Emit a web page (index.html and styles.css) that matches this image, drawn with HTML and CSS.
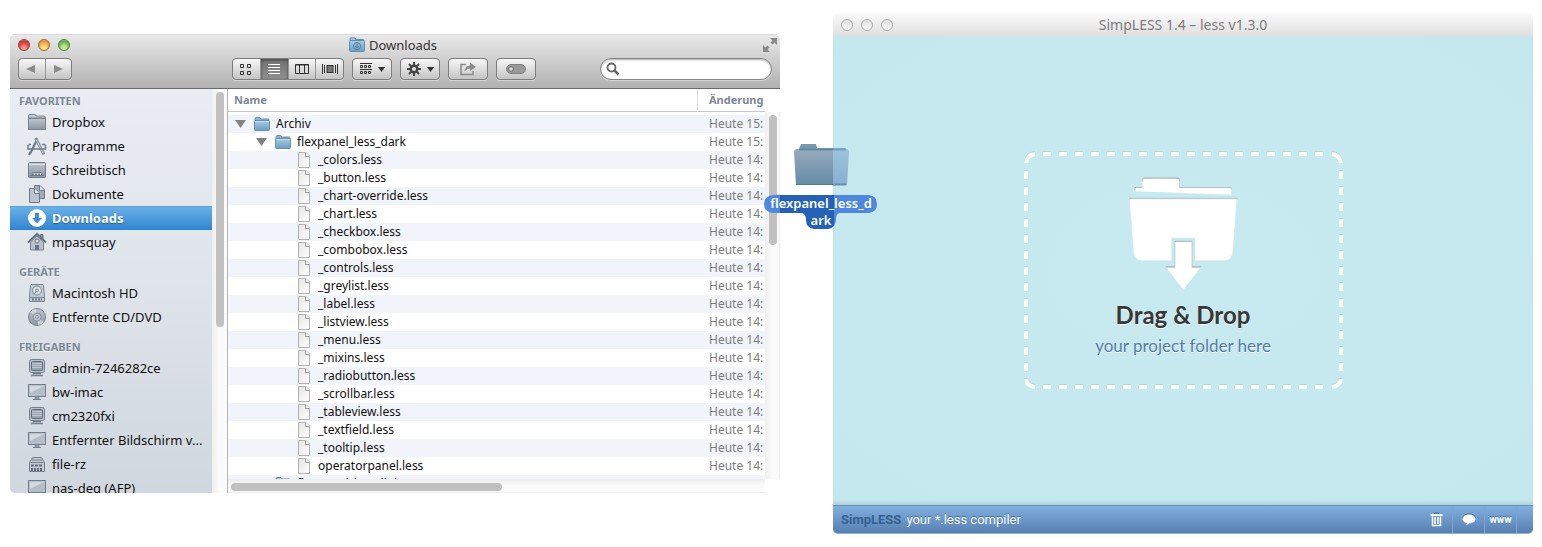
FILE: index.html
```html
<!DOCTYPE html>
<html lang="de">
<head>
<meta charset="utf-8">
<title>SimpLESS</title>
<link rel="stylesheet" href="styles.css">
</head>
<body>
<svg class="defs" width="0" height="0" aria-hidden="true">
  <defs>
    <linearGradient id="blue" x1="0" y1="0" x2="0" y2="1"><stop offset="0" stop-color="#a9cbe0"/><stop offset="1" stop-color="#6b9fc2"/></linearGradient>
    <linearGradient id="grey" x1="0" y1="0" x2="0" y2="1"><stop offset="0" stop-color="#c0c5cd"/><stop offset="1" stop-color="#8b94a0"/></linearGradient>
    <linearGradient id="page" x1="0" y1="0" x2="1" y2="1"><stop offset="0" stop-color="#e4e4e4"/><stop offset="1" stop-color="#ffffff"/></linearGradient>
    <symbol id="i-folder" viewBox="0 0 16 14"><path d="M1 2.500Q1 .5 2 .5H5.500Q6.500 .5 6.500 2H14.500Q15 2 15 3V5H1Z" fill="#8fb5cf" stroke="#648eac"/><rect x=".5" y="3.500" width="15" height="10" rx="1" fill="url(#blue)" stroke="#6691b0"/><path d="M1 4.500H15" stroke="#c3dcec"/></symbol>
    <symbol id="i-file" viewBox="0 0 12 16"><path d="M.5 .5H8L11.500 4V15.500H.5Z" fill="url(#page)" stroke="#b2b2b2"/><path d="M7.500 .5V4.500H11.500" fill="#fff" stroke="#999"/></symbol>
    <symbol id="i-dropbox" viewBox="0 0 20 20"><path d="M1.500 6V4Q1.500 2.500 3 2.500H8Q9 2.500 9 4H17Q18.500 4 18.500 6Z" fill="#c3c8cf" stroke="#7f8893"/><rect x="1.500" y="6.500" width="17" height="11" fill="url(#grey)" stroke="#7a838e"/></symbol>
    <symbol id="i-apps" viewBox="0 0 20 20"><path d="M10.500 2.500L3.500 17M2 19L3.500 16" stroke="#6f7b88" stroke-width="2.200"/><path d="M8.500 2L17 18.500" stroke="#8994a0" stroke-width="3"/><path d="M9.500 4L16 17" stroke="#c8ced5"/><path d="M1 9V13H18.500V9M1.500 8.500H4M15 8.500H18.500" fill="none" stroke="#6f7b88" stroke-width="1.500"/></symbol>
    <symbol id="i-desktop" viewBox="0 0 20 20"><rect x="1.500" y="2.500" width="17" height="15" rx="1" fill="url(#grey)" stroke="#717c89"/><path d="M2 4.500H18" stroke="#e3e7ec"/><path d="M3.500 15.500H16.500L14.500 12.500H5.500Z" fill="#dfe3e9" stroke="#707b87"/><path d="M5 14.500H15" stroke="#6b7683" stroke-width="2" stroke-dasharray="2 1"/></symbol>
    <symbol id="i-docs" viewBox="0 0 20 20"><path d="M7.500 1.500H13L17.500 6V14.500H7.500Z" fill="#a3acb7" stroke="#707b87"/><path d="M12.500 1.500V6.500H17.500" fill="#e4e7ec" stroke="#707b87"/><path d="M2.500 4.500H8L12.500 9V18.500H2.500Z" fill="#bcc3cc" stroke="#707b87"/><path d="M7.500 4.500V9.500H12.500" fill="#e4e7ec" stroke="#707b87"/></symbol>
    <symbol id="i-down" viewBox="0 0 20 20"><circle cx="10" cy="10" r="9" fill="#fff"/><path d="M8 5H12V10H15L10 15.500L5 10H8Z" fill="#3f8ed4"/></symbol>
    <symbol id="i-home" viewBox="0 0 20 20"><path d="M3.500 10L10 4L16.500 10V18H3.500Z" fill="#b9c0ca" stroke="#7b8592"/><path d="M13.500 7V2.500H16V9" fill="#8f99a5" stroke="#68737f"/><path d="M1 10.500L10 2L19 10.500" fill="none" stroke="#68737f" stroke-width="2"/><circle cx="10" cy="9" r="2" fill="#dfe3e8" stroke="#68737f"/><rect x="8" y="13" width="4" height="5" fill="#6a7581"/></symbol>
    <symbol id="i-hd" viewBox="0 0 20 20"><path d="M3.500 2.500Q3.500 1.500 5 1.500H15Q16.500 1.500 16.500 2.500L17.500 14V18.500H2.500V14Z" fill="#c3c9d1" stroke="#7b8592"/><circle cx="10" cy="7.500" r="4.500" fill="#dfe3e9" stroke="#7b8592"/><circle cx="10" cy="7.500" r="1.500" fill="none" stroke="#7b8592"/><path d="M10 8L6 11.500" stroke="#7b8592"/><path d="M3 14.500H17" stroke="#7b8592"/><path d="M5 16.500H15" stroke="#6a7581" stroke-width="2" stroke-dasharray="2 1"/></symbol>
    <symbol id="i-cd" viewBox="0 0 20 20"><circle cx="10" cy="10" r="8.500" fill="url(#grey)" stroke="#7b8592"/><path d="M10 10L3 5Q6 1.500 9 2ZM10 10L17 15Q14 18.500 11 18Z" fill="#dde1e7" opacity=".7"/><circle cx="10" cy="10" r="4" fill="#c5cbd3" stroke="#8993a0"/><circle cx="10" cy="10" r="1.500" fill="#eef0f3" stroke="#7b8592"/></symbol>
    <symbol id="i-pc" viewBox="0 0 20 20"><rect x="2.500" y="1.500" width="15" height="13" rx="2" fill="#bcc3cc" stroke="#75808c"/><rect x="4.500" y="3.500" width="11" height="9" rx="1" fill="#98a2ae" stroke="#5f6b79"/><path d="M5 5.500H15M5 7.500H15M5 9.500H15" stroke="#c3c9d1"/><path d="M6 15.500H14M4 17.500H16" stroke="#75808c" stroke-width="1.500"/></symbol>
    <symbol id="i-mac" viewBox="0 0 20 20"><rect x="1.500" y="2.500" width="17" height="12" fill="#b5bdc7" stroke="#75808c"/><path d="M3 4H17L3 11Z" fill="#d5dae0"/><path d="M8 15H12L13 17.500H7Z" fill="#8e98a4"/><path d="M6 17.500H14" stroke="#75808c"/></symbol>
    <symbol id="i-server" viewBox="0 0 20 20"><path d="M5.500 3.500H14.500L17.500 8.500V17.500H2.500V8.500Z" fill="#c4cad2" stroke="#75808c"/><path d="M5 6H15M3.500 8.500H16.500" stroke="#75808c"/><path d="M4 11.500H16" stroke="#5f6b79" stroke-width="2" stroke-dasharray="3 1"/><path d="M4 15.500H16" stroke="#5f6b79" stroke-width="3" stroke-dasharray="2 1"/></symbol>
  </defs>
</svg>

<section class="window finder" aria-label="Downloads">
  <header class="chrome">
    <div class="titlebar">
      <div class="lights">
        <button class="light red" aria-label="Schließen"></button>
        <button class="light amber" aria-label="Minimieren"></button>
        <button class="light green" aria-label="Zoomen"></button>
      </div>
      <h1 class="title">
        <svg width="16" height="16" viewBox="0 0 16 16" aria-hidden="true"><path d="M1 4V2Q1 .8 2 .8H5.500Q6.500 .8 6.500 2.500H14.500Q15 2.500 15 4Z" fill="#a3c6dc" stroke="#5f8fb2"/><rect x=".5" y="3.500" width="15" height="11" rx="1" fill="url(#blue)" stroke="#5f8fb2"/><circle cx="8" cy="9" r="3.500" fill="none" stroke="#4c7da2"/><path d="M8 6.500V10.500M6.300 9L8 11L9.700 9" fill="none" stroke="#4c7da2"/></svg>
        Downloads
      </h1>
      <button class="bare full" aria-label="Vollbild"><svg width="16" height="16" viewBox="0 0 16 16"><path d="M8 1H15V8L12.500 5.500L10.500 7.500L8.500 5.500L10.500 3.500ZM1 8L3.500 10.500L5.500 8.500L7.500 10.500L5.500 12.500L8 15H1Z" fill="#888"/></svg></button>
    </div>
    <div class="toolbar">
      <div class="group nav">
        <button class="seg" aria-label="Zurück"><svg width="11" height="10"><path d="M0 5L9 1V9Z" fill="#8a8a8a"/></svg></button>
        <button class="seg" aria-label="Vorwärts"><svg width="11" height="10"><path d="M10 5L1 1V9Z" fill="#8a8a8a"/></svg></button>
      </div>
      <div class="group views">
        <button class="seg" aria-label="Symbole"><svg width="12" height="12" fill="none" stroke="#333"><path d="M.5 1.500H3.500V4.500H.5ZM7.500 1.500H10.500V4.500H7.500ZM.5 8.500H3.500V11.500H.5ZM7.500 8.500H10.500V11.500H7.500Z"/></svg></button>
        <button class="seg on" aria-label="Liste"><svg width="12" height="12" stroke="#fff"><path d="M0 1.500H12M0 4.500H12M0 7.500H12M0 10.500H12"/></svg></button>
        <button class="seg" aria-label="Spalten"><svg width="14" height="12" fill="none" stroke="#333"><path d="M.5 1.500H13.500V10.500H.5ZM4.500 1V11M9.500 1V11M0 2H14"/></svg></button>
        <button class="seg" aria-label="Cover Flow"><svg width="16" height="12" stroke="#333"><path d="M.5 1V11M2.500 2V10M13.500 2V10M15.500 1V11"/><rect x="5" y="2.500" width="6" height="7" fill="#777"/></svg></button>
      </div>
      <button class="tool" aria-label="Ausrichten"><svg width="12" height="12" fill="none" stroke="#333"><path d="M0 .5H12M0 6.500H12"/><path d="M.5 2.500H2.500V4.500H.5ZM4.500 2.500H6.500V4.500H4.500ZM8.500 2.500H10.500V4.500H8.500ZM.5 8.500H2.500V10.500H.5ZM4.500 8.500H6.500V10.500H4.500ZM8.500 8.500H10.500V10.500H8.500Z"/></svg><svg width="7" height="5"><path d="M0 0H7L3.500 5Z" fill="#333"/></svg></button>
      <button class="tool" aria-label="Aktion"><svg width="14" height="14" viewBox="0 0 14 14" fill="none" stroke="#444"><circle cx="7" cy="7" r="3.300" stroke-width="2.400"/><path d="M7 0V3M7 11V14M0 7H3M11 7H14M2 2L4.200 4.200M9.800 9.800L12 12M2 12L4.200 9.800M9.800 4.200L12 2" stroke-width="2"/></svg><svg width="7" height="5"><path d="M0 0H7L3.500 5Z" fill="#333"/></svg></button>
      <button class="tool" aria-label="Bereitstellen"><svg width="16" height="14" viewBox="0 0 16 14"><path d="M6 2.500H1V12.500H13V9" fill="none" stroke="#8a8a8a" stroke-width="1.500"/><path d="M4.500 9.500Q5 4 10 3.500V.5L16 5L10 9V6.500Q7 6.500 4.500 9.500Z" fill="#8a8a8a"/></svg></button>
      <button class="tool" aria-label="Etikett"><svg width="20" height="10"><rect x=".5" y=".5" width="19" height="9" rx="4.500" fill="#999" stroke="#808080"/><circle cx="5" cy="5" r="2.300" fill="#d8d8d8" stroke="#707070"/></svg></button>
      <label class="search"><svg width="14" height="14" viewBox="0 0 14 14" fill="none" stroke="#666"><circle cx="5.500" cy="5.500" r="4" stroke-width="1.800"/><path d="M8.500 8.500L12.500 12.500" stroke-width="2.500"/></svg><input type="search" aria-label="Suchen"></label>
    </div>
  </header>

  <div class="panes">
    <nav class="sidebar">
      <h2>FAVORITEN</h2>
      <a href="#"><svg><use href="#i-dropbox"/></svg>Dropbox</a>
      <a href="#"><svg><use href="#i-apps"/></svg>Programme</a>
      <a href="#"><svg><use href="#i-desktop"/></svg>Schreibtisch</a>
      <a href="#"><svg><use href="#i-docs"/></svg>Dokumente</a>
      <a href="#" class="current" aria-current="page"><svg><use href="#i-down"/></svg>Downloads</a>
      <a href="#"><svg><use href="#i-home"/></svg>mpasquay</a>
      <h2>GERÄTE</h2>
      <a href="#"><svg><use href="#i-hd"/></svg>Macintosh HD</a>
      <a href="#"><svg><use href="#i-cd"/></svg>Entfernte CD/DVD</a>
      <h2>FREIGABEN</h2>
      <a href="#"><svg><use href="#i-pc"/></svg>admin-7246282ce</a>
      <a href="#"><svg><use href="#i-mac"/></svg>bw-imac</a>
      <a href="#"><svg><use href="#i-pc"/></svg>cm2320fxi</a>
      <a href="#"><svg><use href="#i-mac"/></svg>Entfernter Bildschirm v...</a>
      <a href="#"><svg><use href="#i-server"/></svg>file-rz</a>
      <a href="#"><svg><use href="#i-mac"/></svg>nas-deq (AFP)</a>
    </nav>
    <div class="track side-track"><span class="thumb"></span></div>

    <div class="list">
      <div class="rows">
        <table>
          <colgroup><col><col class="date-col"></colgroup>
          <thead><tr><th scope="col">Name</th><th scope="col">Änderung</th></tr></thead>
          <tbody>
            <tr><td><div class="entry"><button class="bare tri" aria-label="Archiv zuklappen"></button><svg class="ic"><use href="#i-folder"/></svg>Archiv</div></td><td>Heute 15:</td></tr>
            <tr><td><div class="entry sub"><button class="bare tri" aria-label="flexpanel_less_dark zuklappen"></button><svg class="ic"><use href="#i-folder"/></svg>flexpanel_less_dark</div></td><td>Heute 15:</td></tr>
            <tr><td><div class="entry leaf"><svg class="ic"><use href="#i-file"/></svg>_colors.less</div></td><td>Heute 14:</td></tr>
            <tr><td><div class="entry leaf"><svg class="ic"><use href="#i-file"/></svg>_button.less</div></td><td>Heute 14:</td></tr>
            <tr><td><div class="entry leaf"><svg class="ic"><use href="#i-file"/></svg>_chart-override.less</div></td><td>Heute 14:</td></tr>
            <tr><td><div class="entry leaf"><svg class="ic"><use href="#i-file"/></svg>_chart.less</div></td><td>Heute 14:</td></tr>
            <tr><td><div class="entry leaf"><svg class="ic"><use href="#i-file"/></svg>_checkbox.less</div></td><td>Heute 14:</td></tr>
            <tr><td><div class="entry leaf"><svg class="ic"><use href="#i-file"/></svg>_combobox.less</div></td><td>Heute 14:</td></tr>
            <tr><td><div class="entry leaf"><svg class="ic"><use href="#i-file"/></svg>_controls.less</div></td><td>Heute 14:</td></tr>
            <tr><td><div class="entry leaf"><svg class="ic"><use href="#i-file"/></svg>_greylist.less</div></td><td>Heute 14:</td></tr>
            <tr><td><div class="entry leaf"><svg class="ic"><use href="#i-file"/></svg>_label.less</div></td><td>Heute 14:</td></tr>
            <tr><td><div class="entry leaf"><svg class="ic"><use href="#i-file"/></svg>_listview.less</div></td><td>Heute 14:</td></tr>
            <tr><td><div class="entry leaf"><svg class="ic"><use href="#i-file"/></svg>_menu.less</div></td><td>Heute 14:</td></tr>
            <tr><td><div class="entry leaf"><svg class="ic"><use href="#i-file"/></svg>_mixins.less</div></td><td>Heute 14:</td></tr>
            <tr><td><div class="entry leaf"><svg class="ic"><use href="#i-file"/></svg>_radiobutton.less</div></td><td>Heute 14:</td></tr>
            <tr><td><div class="entry leaf"><svg class="ic"><use href="#i-file"/></svg>_scrollbar.less</div></td><td>Heute 14:</td></tr>
            <tr><td><div class="entry leaf"><svg class="ic"><use href="#i-file"/></svg>_tableview.less</div></td><td>Heute 14:</td></tr>
            <tr><td><div class="entry leaf"><svg class="ic"><use href="#i-file"/></svg>_textfield.less</div></td><td>Heute 14:</td></tr>
            <tr><td><div class="entry leaf"><svg class="ic"><use href="#i-file"/></svg>_tooltip.less</div></td><td>Heute 14:</td></tr>
            <tr><td><div class="entry leaf"><svg class="ic"><use href="#i-file"/></svg>operatorpanel.less</div></td><td>Heute 14:</td></tr>
            <tr><td><div class="entry sub closed"><svg class="ic"><use href="#i-folder"/></svg>flexpanel_less_light</div></td><td></td></tr>
          </tbody>
        </table>
      </div>
      <div class="track list-track"><span class="thumb"></span></div>
      <div class="track bottom-track"><span class="thumb"></span></div>
    </div>
  </div>
</section>

<section class="window simpless" aria-label="SimpLESS">
  <header class="plainbar">
    <div class="lights">
      <button class="light" aria-label="Close"></button>
      <button class="light" aria-label="Minimize"></button>
      <button class="light" aria-label="Zoom"></button>
    </div>
    <h1 class="title faded">SimpLESS 1.4 – less v1.3.0</h1>
  </header>
  <main class="stage">
    <div class="dropzone">
      <svg class="dashes" width="319" height="239" viewBox="0 0 319 239" fill="none" aria-hidden="true">
        <g stroke="#b4d6dc" stroke-width="4">
          <path d="M19 2H300M19 235H300" stroke-dasharray="8 8"/>
          <path d="M2 19V220M317 19V220" stroke-dasharray="8 8"/>
          <path d="M2 11Q3 3 11 2M308 2Q316 3 317 11M317 227Q316 234 308 235M11 235Q3 234 2 227"/>
        </g>
        <g stroke="#fff" stroke-width="4">
          <path d="M19 3H300M19 236H300" stroke-dasharray="8 8"/>
          <path d="M2 20V220M317 20V220" stroke-dasharray="8 8"/>
          <path d="M2 12Q3 4 11 3M308 3Q316 4 317 12M317 228Q316 235 308 236M11 236Q3 235 2 228"/>
        </g>
      </svg>
      <svg class="artwork" width="109" height="114" viewBox="360 112 327 342" aria-hidden="true">
        <g fill="#b3bfc2">
          <path d="M377 142H399V121Q399 113 407 113H505Q513 113 513 121V142H668V150H377Z"/>
          <path d="M360 174H685V181H360Z"/>
        </g>
        <path d="M378 145H400V124Q400 117 408 117H504Q511 117 511 124V145H667V165L378 155Z" fill="#fff"/>
        <path d="M361 178H684L672 335Q669 363 648 363H398Q376 363 373 335Z" fill="#fff" stroke="#d8e5e8" stroke-width="2"/>
        <path d="M487 294H558V373H590L523 460L456 373H487Z" fill="#c6e9ef"/>
        <path d="M497 303H550V379H577L523 450L469 379H497Z" fill="#b3bfc2"/>
        <path d="M499 307H548V384H574L523 451L472 384H499Z" fill="#fff"/>
      </svg>
      <h2>Drag &amp; Drop</h2>
      <p>your project folder here</p>
    </div>
  </main>
  <footer class="statusbar">
    <strong>SimpLESS</strong><span class="tagline">your *.less compiler</span>
    <div class="actions">
      <button class="bare" aria-label="Clear"><svg width="13" height="15" viewBox="0 0 13 15" fill="none" stroke="#fff"><path d="M4.500 2.500V1H8.500V2.500" stroke="#3b618d"/><path d="M.5 3H12.500" stroke-width="2"/><path d="M2.500 4.500V13.500H10.500V4.500M5 5V12M8 5V12" stroke-width="1.500"/></svg></button>
      <button class="bare" aria-label="Feedback"><svg width="14" height="13" viewBox="0 0 14 13"><ellipse cx="7" cy="5" rx="6.500" ry="4.500" fill="#3b618d"/><path d="M7 1.500C11 1.500 13.500 3.500 13.500 6C13.500 8.500 11 10 7.500 10.300Q6 12 4 12.300Q5 11 5 10C2 9.500 .5 8 .5 6C.5 3.500 3 1.500 7 1.500Z" fill="#fff"/></svg></button>
      <a href="#">www</a>
    </div>
  </footer>

  <div class="dragged">
    <svg width="57" height="46" viewBox="0 0 57 46" aria-hidden="true">
      <defs>
        <linearGradient id="over" x1="0" y1="0" x2="0" y2="1"><stop offset="0" stop-color="#98abbd"/><stop offset="1" stop-color="#648ba6"/></linearGradient>
        <linearGradient id="light" x1="0" y1="0" x2="0" y2="1"><stop offset="0" stop-color="#9cc4dc"/><stop offset="1" stop-color="#87b0d2"/></linearGradient>
        <clipPath id="l"><path d="M0 0H40V46H0Z"/></clipPath>
        <clipPath id="r"><path d="M40 0H57V46H40Z"/></clipPath>
      </defs>
      <g clip-path="url(#l)"><path d="M5 10L8 2H23L24 6H52L54 10Z" fill="#7798ae"/><path d="M1 10Q1 8 3 7H54Q56 8 56 10L54 43H3Z" fill="url(#over)"/><path d="M6 7.500H53" stroke="#628ba7" stroke-width="2"/><path d="M3 42.500H54" stroke="#567d98"/></g>
      <g clip-path="url(#r)"><path d="M5 10L8 2H23L24 6H52L54 10Z" fill="#7eabcb"/><path d="M1 10Q1 8 3 7H54Q56 8 56 10L54 43H3Z" fill="url(#light)"/><path d="M6 7.500H53" stroke="#70a1c6" stroke-width="2"/><path d="M3 42.500H53" stroke="#6590b1" stroke-width="2"/></g>
    </svg>
    <div class="caption">
      <svg width="114" height="34" viewBox="0 0 114 34" aria-hidden="true">
        <defs><linearGradient id="pill" gradientUnits="userSpaceOnUse" x1="0" y1="0" x2="114" y2="0"><stop offset=".14" stop-color="#4e88de"/><stop offset=".14" stop-color="#2562b6"/><stop offset=".61" stop-color="#2562b6"/><stop offset=".61" stop-color="#4e88de"/></linearGradient></defs>
        <path d="M9 0H105Q113 1 113 9Q113 17 105 18H76Q72 18 72 24Q72 33 64 34H50Q42 33 42 25Q42 18 37 18H9Q0 17 0 9Q0 1 9 0Z" fill="url(#pill)"/>
      </svg>
      <span>flexpanel_less_d<br>ark</span>
    </div>
  </div>
</section>
</body>
</html>
```

FILE: styles.css
```css
* { box-sizing: border-box; }

body {
  margin: 0;
  height: 100vh;
  min-height: 500px;
  padding: 13px 9px 13px 10px;
  display: flex;
  gap: 53px;
  background: #fff;
  font: 13px/18px "Noto Sans", "Open Sans", sans-serif;
  color: #111;
  overflow: hidden;
}

.defs { position: absolute; }
svg { display: block; flex: none; }
h1, h2, p { margin: 0; font-weight: 400; }
a { color: inherit; text-decoration: none; }

button { font: inherit; color: inherit; padding: 0; border: 0; }
.bare { background: none; }

.window { display: flex; flex-direction: column; min-width: 0; }
.finder { flex: 770 1 0; margin: 21px 0 41px; border-radius: 5px 5px 0 5px; overflow: hidden; }
.simpless { flex: 700 1 0; position: relative; }

/* Title bars */
.chrome {
  height: 55px;
  flex: none;
  border-top: 1px solid #d9d9d9;
  border-bottom: 1px solid #6a6a6a;
  background: linear-gradient(#e9e9e9, #cdcdcd 50%, #b1b1b1);
}
.titlebar, .plainbar {
  display: grid;
  grid-template-columns: 1fr auto 1fr;
  align-items: center;
  padding: 0 8px;
}
.titlebar { height: 20px; padding-right: 12px; }
.lights { display: flex; gap: 8px; }
.light {
  width: 12px;
  height: 12px;
  border-radius: 50%;
  border: 1px solid #aeaeae;
  background: linear-gradient(#dedede, #fafafa);
}
.red { border-color: #8e3a38; background: radial-gradient(circle at 50% 85%, #ffb5ae, #e4504d 50%, #c63b3c 75%, #f5aaaa); }
.amber { border-color: #95662b; background: radial-gradient(circle at 50% 85%, #ffefa1, #efb34c 55%, #dc9438 75%, #fbe0ae); }
.green { border-color: #4b7a36; background: radial-gradient(circle at 50% 85%, #dcf8b2, #86c463 55%, #68a94c 75%, #d2efc0); }
.title { display: flex; align-items: center; gap: 4px; font-size: 13px; line-height: 20px; color: #333; white-space: nowrap; }
.full { justify-self: end; margin-right: -10px; }

.toolbar { display: flex; align-items: center; gap: 8px; padding: 3px 8px 0; }
.group, .tool {
  height: 22px;
  border: 1px solid #7d7d7d;
  border-radius: 4px;
  background: linear-gradient(#f8f8f8, #c4c4c4);
  box-shadow: 0 1px 0 #d4d4d4;
}
.group { display: flex; overflow: hidden; }
.nav { width: 54px; margin-right: 152px; }
.views { width: 112px; }
.seg { flex: 1; display: grid; place-items: center; background: none; }
.seg + .seg { border-left: 1px solid #959595; }
.seg.on { background: linear-gradient(#727272, #8f8f8f); box-shadow: inset 0 1px 3px #444; }
.tool { width: 40px; display: flex; align-items: center; justify-content: center; gap: 6px; }
.search {
  display: flex;
  align-items: center;
  width: 172px;
  height: 22px;
  margin-left: auto;
  padding: 0 5px;
  border: 1px solid #858585;
  border-radius: 11px;
  background: #fff;
  box-shadow: inset 0 1px 2px #aaa, 0 1px 0 #d4d4d4;
}
.search input { flex: 1; min-width: 0; border: 0; outline: 0; background: none; font: inherit; }

/* Sidebar */
.panes { flex: 1; min-height: 0; display: flex; }
.sidebar {
  width: 202px;
  flex: none;
  overflow: hidden;
  background: linear-gradient(#e9ecf3, #dfe3ea 50%, #d0d7df);
}
.sidebar h2 {
  height: 21px;
  padding: 3px 0 0 9px;
  font-size: 11px;
  font-weight: 700;
  color: #7b8794;
  text-shadow: 0 1px 0 #f4f6f9;
}
.sidebar a + h2 { margin-top: 6px; }
.sidebar a { display: flex; align-items: center; gap: 5px; height: 24px; padding-left: 17px; white-space: nowrap; }
.sidebar svg { width: 20px; height: 20px; }
.sidebar .current {
  background: linear-gradient(#6db2e6, #2f84d2);
  box-shadow: inset 0 1px 0 #5ea5dc;
  color: #fff;
  font-weight: 700;
  text-shadow: 0 1px 1px #2561a0;
}

.track { background: linear-gradient(90deg, #efefef, #fbfbfb 50%, #fafafa); }
.thumb { display: block; border-radius: 4px; background: #c1c1c1; }
.side-track { width: 15px; flex: none; padding: 3px 3px 3px 4px; }
.side-track .thumb { width: 8px; height: 59%; }

/* File list */
.list {
  flex: 1;
  min-width: 0;
  display: grid;
  grid-template-columns: minmax(0, 1fr) 15px;
  grid-template-rows: minmax(0, 1fr) 14px;
  border-left: 1px solid #b3b3b3;
}
.rows { overflow: hidden; }
.list-track { margin-top: 23px; padding: 3px 2px 3px 4px; border-right: 1px solid #eee; }
.list-track .thumb { width: 8px; height: 36%; }
.bottom-track { padding: 4px 3px; background: linear-gradient(#ececec, #fbfbfb 50%); border-bottom: 1px solid #eee; }
.bottom-track .thumb { width: 51%; height: 8px; }

table { width: 100%; border-collapse: separate; border-spacing: 0; table-layout: fixed; font-size: 12px; }
.date-col { width: 68px; }
th {
  height: 23px;
  padding: 0 0 0 6px;
  border-bottom: 1px solid #c8c8c8;
  font-size: 11px;
  font-weight: 700;
  text-align: left;
  color: #7b8794;
}
th + th { border-left: 1px solid #dcdcdc; padding-left: 11px; }
td { height: 18px; padding: 0; overflow: hidden; white-space: nowrap; }
td + td { padding-left: 12px; color: #7d7d7d; }
tbody tr:nth-child(odd) { background: #f1f5fb; }
tbody::before { content: ""; display: table-row; height: 3px; }
.entry { display: flex; align-items: center; height: 18px; padding-left: 7px; }
.sub { padding-left: 28px; }
.leaf { padding-left: 68px; }
.closed { padding-left: 47px; }
.ic { width: 16px; height: 14px; margin-right: 6px; }
.leaf .ic { height: 16px; }
.tri { width: 11px; height: 8px; margin-right: 8px; background: #828282; clip-path: polygon(0 0, 100% 0, 50% 100%); }

/* SimpLESS */
.plainbar { height: 23px; flex: none; border-radius: 5px 5px 0 0; background: linear-gradient(#fafafa, #dfdfdf); }
.faded { font-size: 14px; color: #7d7d7d; }
.stage {
  flex: 1;
  display: grid;
  place-items: center;
  background: radial-gradient(#c7eaf0, #c4e8ee);
  box-shadow: inset 0 -4px 4px -2px #a8ccd2;
}
.dropzone { position: relative; width: 319px; height: 239px; padding-top: 26px; display: flex; flex-direction: column; align-items: center; font-family: Lato, sans-serif; }
.dashes { position: absolute; inset: 0; }
.dropzone h2 { margin-top: 9px; font-size: 24px; line-height: 30px; font-weight: 700; color: #383838; text-shadow: 0 1px 0 #fff; }
.dropzone p { margin-top: 4px; font-size: 17px; line-height: 24px; color: #527da8; font-weight: 400; text-shadow: 0 1px 0 #fff; }

.statusbar {
  flex: none;
  height: 29px;
  display: flex;
  align-items: center;
  padding: 0 16px 0 8px;
  border-top: 1px solid #5f92bd;
  border-bottom: 1px solid #8db2d3;
  border-radius: 0 0 5px 5px;
  background: linear-gradient(#83afe0, #5580b1);
  font-family: Roboto, sans-serif;
  color: #fff;
}
.statusbar strong { color: #34608f; font-weight: 700; }
.tagline { margin-left: 5px; text-shadow: 0 -1px 0 #47709e; }
.actions { display: flex; align-self: stretch; margin-left: auto; }
.actions > * { width: 32px; display: grid; place-items: center; border-right: 1px solid #7ea6d1; }
.actions a { font-size: 10px; font-weight: 700; text-shadow: 0 -1px 0 #47709e; }

/* Folder being dragged between both windows */
.dragged { position: absolute; left: -69px; top: 129px; width: 114px; }
.dragged > svg { margin: 0 auto; }
.caption { position: relative; margin-top: 7px; height: 34px; color: #fff; font-size: 13px; line-height: 17px; font-weight: 600; text-align: center; }
.caption svg { position: absolute; inset: 0; }
.caption span { position: relative; }
```
